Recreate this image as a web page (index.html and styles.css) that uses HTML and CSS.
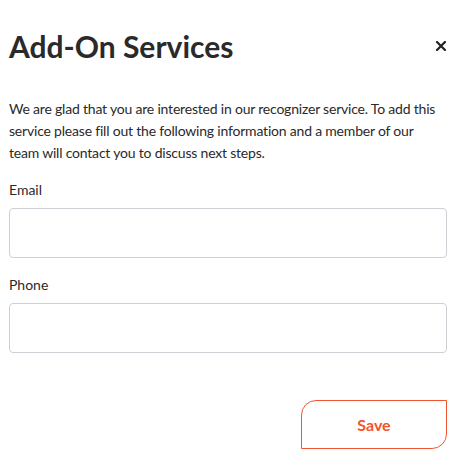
FILE: index.html
```html
<!DOCTYPE html>
<html>
<head>
    <link rel="stylesheet" href="styles.css">
    <title>Add-On Services</title>
</head>
<body>
    <div class="modal">
        <div class="modal-header">
            <h1>Add-On Services</h1>
            <button class="close-button" aria-label="Close">
                <svg width="10" height="10" viewBox="0 0 10 10">
                    <path d="M1 1 L9 9 M9 1 L1 9" stroke="#222" stroke-width="2.2" stroke-linecap="square"/>
                </svg>
            </button>
        </div>
        <p class="intro">We are glad that you are interested in our recognizer service. To add this service please fill out the following information and a member of our team will contact you to discuss next steps.</p>
        <form class="addon-form">
            <label for="email">Email</label>
            <input type="email" id="email">
            <label for="phone">Phone</label>
            <input type="tel" id="phone">
            <div class="form-actions">
                <button type="button" class="save-button">Save</button>
            </div>
        </form>
    </div>
</body>
</html>
```

FILE: styles.css
```css
body {
    margin: 0;
    font-family: Lato, "Open Sans", sans-serif;
    color: #2a2a2a;
    background: #fff;
}

.modal {
    padding: 0 14px 0 9px;
}

.modal-header {
    display: flex;
    justify-content: space-between;
    align-items: center;
    padding-top: 26px;
    height: 40px;
}

h1 {
    margin: 0;
    font-size: 30px;
    font-weight: 700;
    line-height: 40px;
}

.close-button {
    border: none;
    background: none;
    padding: 0;
    margin-right: 1px;
    cursor: pointer;
    display: flex;
}

.intro {
    margin: 32px 6px 0 0;
    font-size: 14px;
    line-height: 22px;
    letter-spacing: -0.2px;
}

.addon-form {
    display: flex;
    flex-direction: column;
    margin-top: 16px;
}

.addon-form label {
    font-size: 14px;
    line-height: 20px;
    margin-bottom: 8px;
}

.addon-form input {
    height: 50px;
    box-sizing: border-box;
    border: 1px solid #cdd1d6;
    border-radius: 4px;
    margin-bottom: 17px;
    padding: 0 12px;
    font-size: 14px;
}

.form-actions {
    display: flex;
    justify-content: flex-end;
    margin-top: 30px;
}

.save-button {
    width: 146px;
    height: 49px;
    background: #fff;
    border: 1px solid #f2542d;
    border-radius: 15px 0 15px 0;
    color: #f2542d;
    font-family: Lato, sans-serif;
    font-weight: 700;
    font-size: 16px;
    cursor: pointer;
}
```
